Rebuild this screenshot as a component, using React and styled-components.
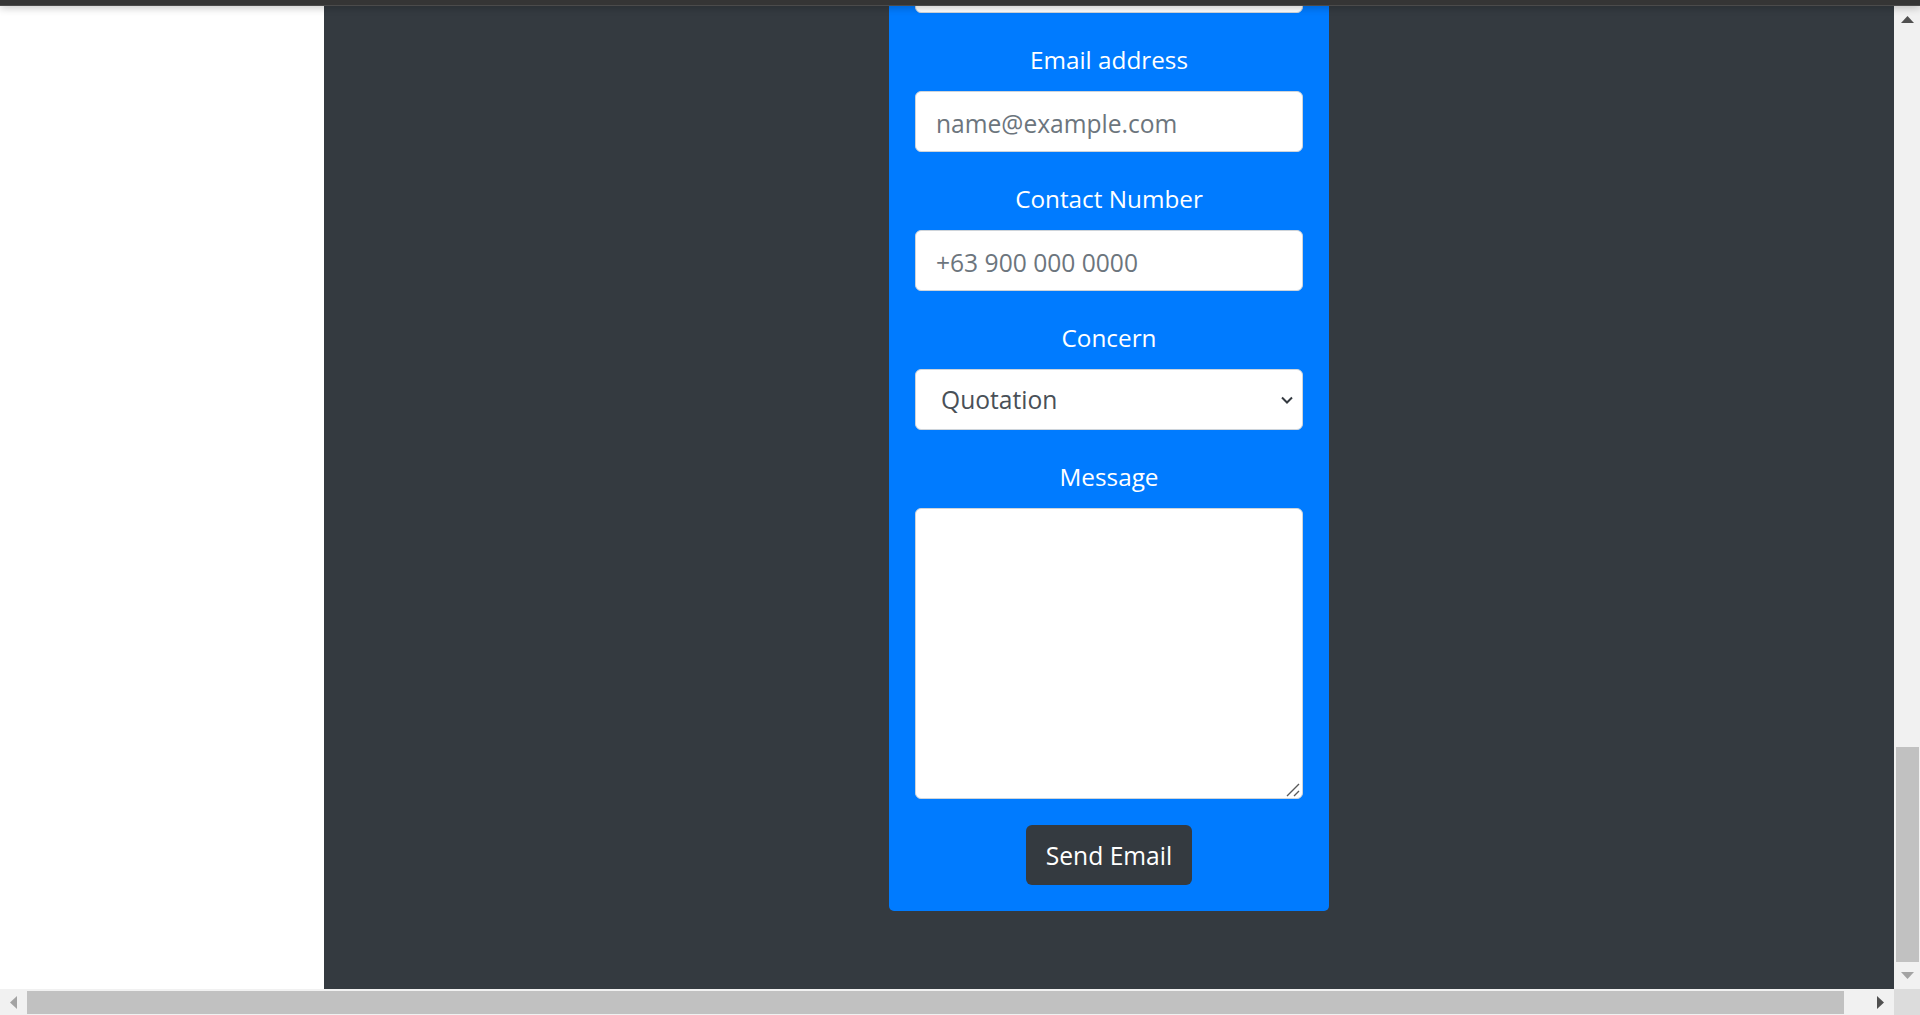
import React, { useState } from 'react';
import styled, { createGlobalStyle } from 'styled-components';

const GlobalStyle = createGlobalStyle`
  * {
    box-sizing: border-box;
  }
  html,
  body {
    margin: 0;
    height: 100%;
    overflow: hidden;
  }
  body {
    font-family: 'Open Sans', 'Noto Sans', sans-serif;
  }
  #root {
    height: 100%;
  }
`;

const Arrow = ({ dir, color }) => {
  const points = {
    up: '0,7 6.5,0 13,7',
    down: '0,0 13,0 6.5,7',
    left: '7,0 7,13 0,6.5',
    right: '0,0 7,6.5 0,13',
  }[dir];
  const vertical = dir === 'up' || dir === 'down';
  return (
    <svg
      width={vertical ? 13 : 7}
      height={vertical ? 7 : 13}
      viewBox={vertical ? '0 0 13 7' : '0 0 7 13'}
    >
      <polygon points={points} fill={color} />
    </svg>
  );
};

const App = () => {
  const [form, setForm] = useState({
    name: '',
    email: '',
    phone: '',
    concern: 'quotation',
    message: '',
  });

  const change = (event) => {
    setForm({ ...form, [event.target.name]: event.target.value });
  };

  return (
    <Window>
      <GlobalStyle />
      <TopBar />
      <MiddleRow>
        <Viewport>
          <SidePane />
          <Stage>
            {/* page is scrolled down: the top of the card sits above the fold */}
            <Card>
              <Field>
                <Label>Name</Label>
                <Input name="name" value={form.name} onChange={change} />
              </Field>
              <Field>
                <Label>Email address</Label>
                <Input
                  name="email"
                  type="email"
                  placeholder="name@example.com"
                  value={form.email}
                  onChange={change}
                />
              </Field>
              <Field>
                <Label>Contact Number</Label>
                <Input
                  name="phone"
                  placeholder="+63 900 000 0000"
                  value={form.phone}
                  onChange={change}
                />
              </Field>
              <Field>
                <Label>Concern</Label>
                <BoxWrap>
                  <Select name="concern" value={form.concern} onChange={change}>
                    <option value="quotation">Quotation</option>
                    <option value="inquiry">Inquiry</option>
                    <option value="support">Support</option>
                    <option value="others">Others</option>
                  </Select>
                  <Chevron width="12" height="8" viewBox="0 0 12 8">
                    <path
                      d="M1 1.5l5 5 5-5"
                      fill="none"
                      stroke="#343a40"
                      strokeWidth="2"
                    />
                  </Chevron>
                </BoxWrap>
              </Field>
              <Field $gap={26}>
                <Label>Message</Label>
                <BoxWrap>
                  <TextArea
                    name="message"
                    value={form.message}
                    onChange={change}
                  />
                  <Grip width="14" height="14" viewBox="0 0 14 14">
                    <path
                      d="M1 13L13 1M8 13l5-5"
                      stroke="#5a5a5a"
                      strokeWidth="1.4"
                    />
                  </Grip>
                </BoxWrap>
              </Field>
              <SendButton type="button">Send Email</SendButton>
            </Card>
          </Stage>
        </Viewport>
        <VScroll>
          <ScrollButton>
            <Arrow dir="up" color="#505050" />
          </ScrollButton>
          <VTrack>
            <VThumb />
          </VTrack>
          <ScrollButton>
            <Arrow dir="down" color="#a3a3a3" />
          </ScrollButton>
        </VScroll>
      </MiddleRow>
      <BottomRow>
        <HScroll>
          <HButton>
            <Arrow dir="left" color="#a3a3a3" />
          </HButton>
          <HThumb />
          <HButton>
            <Arrow dir="right" color="#505050" />
          </HButton>
        </HScroll>
        <Corner />
      </BottomRow>
    </Window>
  );
};

export default App;

const Window = styled.div`
  height: 100vh;
  display: flex;
  flex-direction: column;
  background: #fff;
`;

const TopBar = styled.div`
  flex: none;
  height: 6px;
  background: #353535;
  border-bottom: 1px solid #4b4b4b;
  box-shadow: 0 1px 8px rgba(0, 0, 0, 0.3);
  position: relative;
  z-index: 2;
`;

const MiddleRow = styled.div`
  flex: 1;
  min-height: 0;
  display: flex;
`;

const Viewport = styled.div`
  flex: 1;
  display: flex;
  overflow: hidden;
`;

const SidePane = styled.div`
  flex: none;
  width: 324px;
  background: #fff;
`;

const Stage = styled.div`
  flex: 1;
  display: flex;
  justify-content: center;
  align-items: flex-start;
  background: #343a40;
  overflow: hidden;
`;

const Card = styled.form`
  width: 440px;
  margin-top: -128px;
  padding: 26px;
  background: #007bff;
  border-radius: 5px;
`;

const Field = styled.div`
  display: flex;
  flex-direction: column;
  margin-bottom: ${(p) => p.$gap ?? 30}px;
`;

const Label = styled.label`
  display: block;
  margin-bottom: 14px;
  color: #fff;
  font-size: 24.3px;
  line-height: 34px;
  text-align: center;
`;

const Input = styled.input`
  width: 100%;
  height: 61px;
  padding: 3px 20px 0;
  border: 1px solid #ced4da;
  border-radius: 6px;
  background: #fff;
  color: #495057;
  font-family: inherit;
  font-size: 24.6px;
  outline: none;

  &::placeholder {
    color: #6c757d;
  }
`;

const BoxWrap = styled.div`
  position: relative;
`;

const Select = styled.select`
  display: block;
  width: 100%;
  height: 61px;
  padding: 0 40px 0 25px;
  border: 1px solid #ced4da;
  border-radius: 6px;
  background: #fff;
  color: #495057;
  font-family: inherit;
  font-size: 24.6px;
  appearance: none;
  outline: none;
`;

const Chevron = styled.svg`
  position: absolute;
  right: 10px;
  top: 50%;
  transform: translateY(-50%);
  pointer-events: none;
`;

const TextArea = styled.textarea`
  display: block;
  width: 100%;
  height: 291px;
  padding: 10px 20px;
  border: 1px solid #ced4da;
  border-radius: 6px;
  background: #fff;
  color: #495057;
  font-family: inherit;
  font-size: 24.6px;
  outline: none;
  resize: none;
`;

const Grip = styled.svg`
  position: absolute;
  right: 3px;
  bottom: 2px;
  pointer-events: none;
`;

const SendButton = styled.button`
  display: block;
  height: 60px;
  margin: 0 auto;
  padding: 0 20px;
  border: none;
  border-radius: 6px;
  background: #343a40;
  color: #fff;
  font-family: inherit;
  font-size: 24.6px;
`;

const VScroll = styled.div`
  flex: none;
  width: 26px;
  display: flex;
  flex-direction: column;
  background: #f1f1f1;
`;

const ScrollButton = styled.div`
  flex: none;
  height: 27px;
  display: flex;
  align-items: center;
  justify-content: center;
`;

const VTrack = styled.div`
  flex: 1;
  display: flex;
  flex-direction: column;
  justify-content: flex-end;
`;

const VThumb = styled.div`
  height: 215px;
  margin: 0 1px 0 2px;
  background: #c1c1c1;
`;

const BottomRow = styled.div`
  flex: none;
  height: 26px;
  display: flex;
`;

const HScroll = styled.div`
  flex: 1;
  display: flex;
  align-items: stretch;
  background: #f1f1f1;
`;

const HButton = styled.div`
  flex: none;
  width: 27px;
  display: flex;
  align-items: center;
  justify-content: center;

  &:last-child {
    margin-left: auto;
  }
`;

const HThumb = styled.div`
  width: 1817px;
  margin: 2px 0 1px;
  background: #c1c1c1;
`;

const Corner = styled.div`
  flex: none;
  width: 26px;
  background: #dcdcdc;
`;
